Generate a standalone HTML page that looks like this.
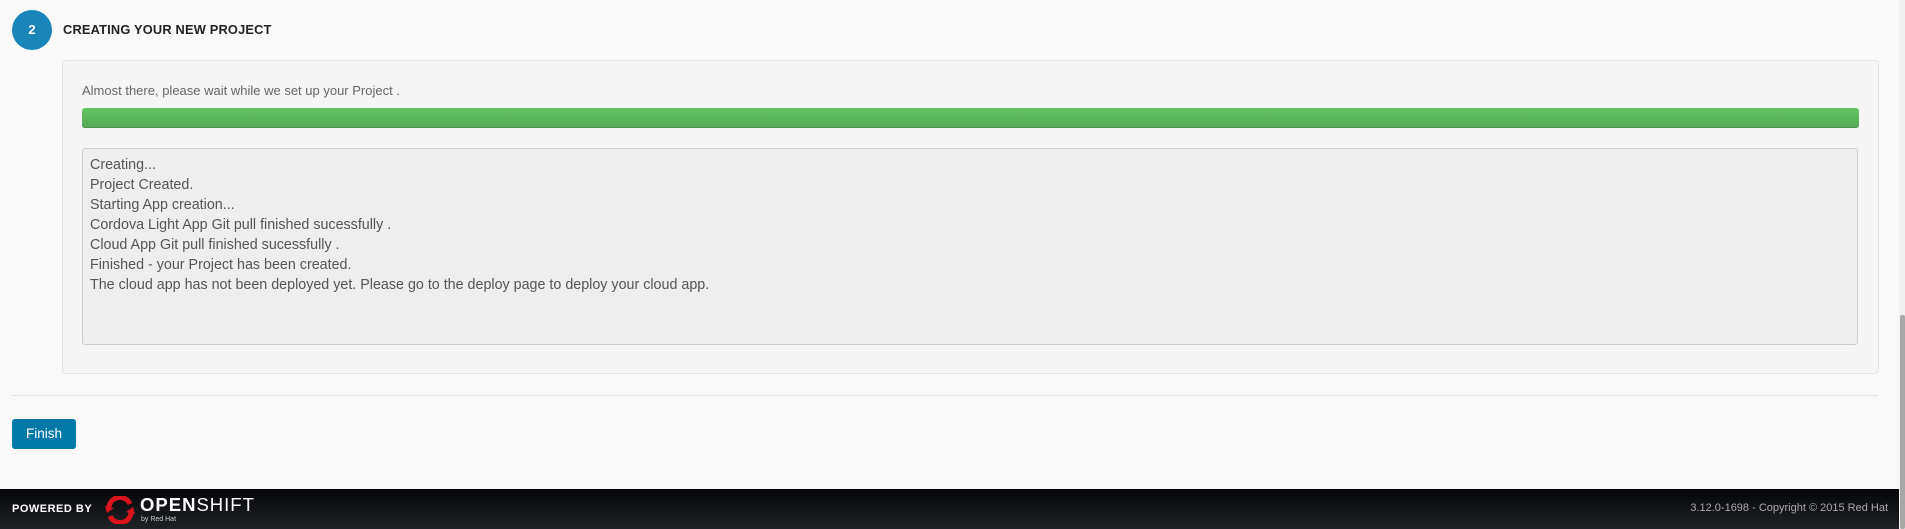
<!DOCTYPE html>
<html><head><style>
*{margin:0;padding:0;box-sizing:border-box}
body{width:1905px;height:529px;background:#f9f9f9;font-family:"Liberation Sans",sans-serif;position:relative;overflow:hidden}
.circ{position:absolute;left:12px;top:10px;width:40px;height:40px;border-radius:50%;background:#1a85b8;color:#fff;font-weight:bold;font-size:13px;text-align:center;line-height:40px}
.title{position:absolute;left:63px;top:22px;font-weight:bold;font-size:12.8px;color:#222;letter-spacing:.2px}
.panel{position:absolute;left:62px;top:60px;width:1817px;height:314px;background:#f5f5f5;border:1px solid #e3e3e3;border-radius:4px}
.msg{position:absolute;left:82px;top:83px;font-size:13px;color:#666}
.bar{position:absolute;left:82px;top:108px;width:1777px;height:20px;border-radius:3px;background:linear-gradient(#62c462,#57a957);box-shadow:inset 0 -1px 0 rgba(0,0,0,.15)}
.log{position:absolute;left:82px;top:148px;width:1776px;height:197px;background:#eee;border:1px solid #ccc;border-radius:3px;padding:6px 7px;font-size:14.3px;line-height:20px;color:#555}
.hr{position:absolute;left:12px;top:395px;width:1866px;height:1px;background:#e2e2e2}
.btn{position:absolute;left:12px;top:419px;width:64px;height:30px;background:#0079a8;border-radius:3px;color:#fff;font-size:13.5px;text-align:center;line-height:30px}
.foot{position:absolute;left:0;top:489px;width:1899px;height:40px;background:linear-gradient(#050608,#1f2226)}
.pb{position:absolute;left:12px;top:14px;color:#fff;font-weight:bold;font-size:11px;letter-spacing:.5px}
.os{position:absolute;left:140px;top:5px;color:#fff;font-size:18.5px;letter-spacing:1px}
.rh{position:absolute;left:141px;top:27px;color:#ccc;font-size:7px}
.copy{position:absolute;right:11px;top:13px;color:#aaa;font-size:11px}
.sb{position:absolute;left:1899px;top:0;width:6px;height:529px;background:#f0f0f0}
.th{position:absolute;left:1900px;top:315px;width:5px;height:214px;background:#a8a8a8;border-radius:2px}
</style></head><body>
<div class="circ">2</div>
<div class="title">CREATING YOUR NEW PROJECT</div>
<div class="panel"></div>
<div class="msg">Almost there, please wait while we set up your Project .</div>
<div class="bar"></div>
<div class="log">Creating...<br>Project Created.<br>Starting App creation...<br>Cordova Light App Git pull finished sucessfully .<br>Cloud App Git pull finished sucessfully .<br>Finished - your Project has been created.<br>The cloud app has not been deployed yet. Please go to the deploy page to deploy your cloud app.</div>
<div class="hr"></div>
<div class="btn">Finish</div>
<div class="foot">
<div class="pb">POWERED BY</div>
<svg style="position:absolute;left:104px;top:7px" width="32" height="28" viewBox="0 0 32 28"><path d="M5 11 A11 11 0 0 1 26 8" fill="none" stroke="#d9141c" stroke-width="5"/><path d="M27 17 A11 11 0 0 1 6 20" fill="none" stroke="#d9141c" stroke-width="5"/><path d="M1 10 L10 12 L3 17Z M31 18 L22 16 L29 11Z" fill="#d9141c"/></svg>
<div class="os"><b>OPEN</b>SHIFT</div>
<div class="rh">by Red Hat</div>
<div class="copy">3.12.0-1698 - Copyright © 2015 Red Hat</div>
</div>
<div class="sb"></div><div class="th"></div>
</body></html>
